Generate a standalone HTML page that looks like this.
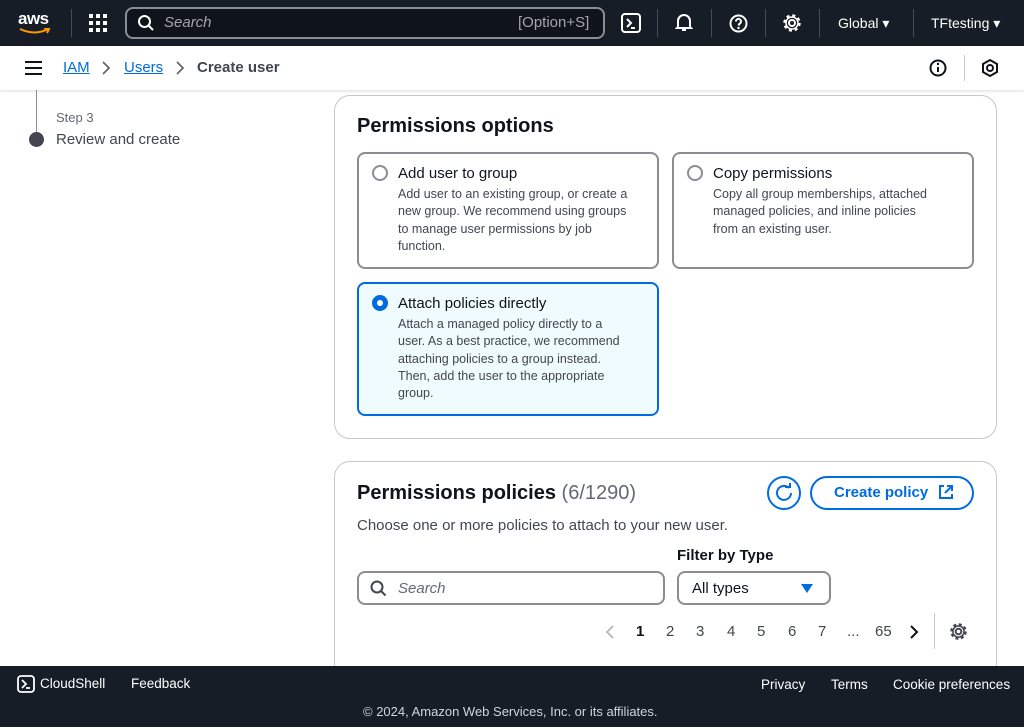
<!DOCTYPE html>
<html><head><meta charset="utf-8"><style>
*{box-sizing:border-box;margin:0;padding:0}
body{width:1024px;height:727px;overflow:hidden;background:#fff;font-family:"Liberation Sans",sans-serif;color:#0f141a;position:relative}
.abs{position:absolute}
.top{left:0;top:0;width:1024px;height:46px;background:#161d26}
.sep{width:1px;height:28px;background:#414d5c;top:9px}
.wt{color:#fff;font-size:14px}
.card{border:1px solid #c6c6cd;border-radius:16px;background:#fff}
.opt{border:2px solid #8c8c94;border-radius:8px;background:#fff}
.radio{width:16px;height:16px;border:2px solid #8c8c94;border-radius:50%;background:#fff}
.ot{font-size:15px;color:#0f141a}
.od{font-size:12.5px;color:#424650;line-height:17.3px}
.foot{left:0;top:666px;width:1024px;height:61px;background:#161d26}
.pg{font-size:15px;color:#424650;top:623px}
</style></head><body>
<div class="abs top"></div>
<div class="abs wt" style="left:18px;top:9px;font-size:17px;font-weight:bold;letter-spacing:-.5px">aws</div>
<svg class="abs" style="left:18px;top:28px" width="34" height="8"><path d="M2 1 Q17 8 30 1 M26 0 L31 1 L29 5" stroke="#ff9900" stroke-width="2" fill="none"/></svg>
<div class="abs sep" style="left:71px"></div>
<svg class="abs" style="left:89px;top:14px" width="18" height="18" fill="#fff"><rect x="0" y="0" width="4" height="4"/><rect x="7" y="0" width="4" height="4"/><rect x="14" y="0" width="4" height="4"/><rect x="0" y="7" width="4" height="4"/><rect x="7" y="7" width="4" height="4"/><rect x="14" y="7" width="4" height="4"/><rect x="0" y="14" width="4" height="4"/><rect x="7" y="14" width="4" height="4"/><rect x="14" y="14" width="4" height="4"/></svg>
<div class="abs" style="left:125px;top:7px;width:480px;height:32px;border:2px solid #8c8c94;border-radius:8px;background:#0f141a"></div>
<svg class="abs" style="left:137px;top:14px" width="18" height="18"><circle cx="7.5" cy="7.5" r="5.5" stroke="#fff" stroke-width="2" fill="none"/><path d="M11.5 11.5 L16 16" stroke="#fff" stroke-width="2"/></svg>
<div class="abs" style="left:164px;top:14px;color:#a4a4ad;font-style:italic;font-size:15px">Search</div>
<div class="abs" style="left:518px;top:14px;color:#a4a4ad;font-size:15px">[Option+S]</div>
<svg class="abs" style="left:621px;top:13px" width="20" height="20"><rect x="1" y="1" width="18" height="18" rx="3" stroke="#fff" stroke-width="2" fill="none"/><path d="M6 6 L10 10 L6 14 M10 15 H14" stroke="#fff" stroke-width="2" fill="none"/></svg>
<div class="abs sep" style="left:657px"></div>
<svg class="abs" style="left:675px;top:13px" width="18" height="20"><path d="M3 14 V8 a6 6 0 0 1 12 0 V14 L16 15 H2 Z M7 17 H11" stroke="#fff" stroke-width="2" fill="none"/></svg>
<div class="abs sep" style="left:711px"></div>
<svg class="abs" style="left:729px;top:14px" width="19" height="19"><circle cx="9.5" cy="9.5" r="8" stroke="#fff" stroke-width="2" fill="none"/><path d="M7 7.5 a2.5 2.5 0 1 1 3.5 2.2 L9.5 11.5" stroke="#fff" stroke-width="2" fill="none"/><circle cx="9.5" cy="14" r="1.2" fill="#fff"/></svg>
<div class="abs sep" style="left:765px"></div>
<svg class="abs" style="left:782px;top:13px" width="20" height="20"><circle cx="10" cy="10" r="3" stroke="#fff" stroke-width="2" fill="none"/><circle cx="10" cy="10" r="7.5" stroke="#fff" stroke-width="2.5" stroke-dasharray="3 2.9" fill="none"/><circle cx="10" cy="10" r="6" stroke="#fff" stroke-width="1.5" fill="none"/></svg>
<div class="abs sep" style="left:819px"></div>
<div class="abs wt" style="left:838px;top:15px">Global ▾</div>
<div class="abs sep" style="left:913px"></div>
<div class="abs wt" style="left:931px;top:15px">TFtesting ▾</div>

<div class="abs" style="left:0;top:46px;width:1024px;height:44px;background:#fff;box-shadow:0 1px 3px rgba(0,0,0,.15)"></div>
<svg class="abs" style="left:25px;top:60px" width="18" height="16"><path d="M0 2H17M0 8H17M0 14H17" stroke="#0f141a" stroke-width="2"/></svg>
<div class="abs" style="left:63px;top:59px;font-size:15px;color:#006ce0;text-decoration:underline">IAM</div>
<svg class="abs" style="left:100px;top:60px" width="12" height="16"><path d="M3 2 L9 8 L3 14" stroke="#656871" stroke-width="1.8" fill="none"/></svg>
<div class="abs" style="left:124px;top:59px;font-size:15px;color:#006ce0;text-decoration:underline">Users</div>
<svg class="abs" style="left:174px;top:60px" width="12" height="16"><path d="M3 2 L9 8 L3 14" stroke="#656871" stroke-width="1.8" fill="none"/></svg>
<div class="abs" style="left:197px;top:59px;font-size:15px;color:#424650;font-weight:bold">Create user</div>
<svg class="abs" style="left:929px;top:59px" width="18" height="18"><circle cx="9" cy="9" r="7.5" stroke="#0f141a" stroke-width="2" fill="none"/><path d="M9 8V13" stroke="#0f141a" stroke-width="2"/><circle cx="9" cy="5" r="1.2" fill="#0f141a"/></svg>
<div class="abs" style="left:964px;top:55px;width:1px;height:26px;background:#c6c6cd"></div>
<svg class="abs" style="left:981px;top:59px" width="18" height="18"><path d="M9 1 L16 5 V13 L9 17 L2 13 V5 Z" stroke="#0f141a" stroke-width="2" fill="none"/><circle cx="9" cy="9" r="3" stroke="#0f141a" stroke-width="2" fill="none"/></svg>

<div class="abs" style="left:36px;top:90px;width:1px;height:42px;background:#8c8c94"></div>
<div class="abs" style="left:56px;top:110px;font-size:13px;color:#656871">Step 3</div>
<div class="abs" style="left:29px;top:132px;width:15px;height:15px;border-radius:50%;background:#424650"></div>
<div class="abs" style="left:56px;top:131px;font-size:15px;color:#424650">Review and create</div>

<div class="abs card" style="left:334px;top:95px;width:663px;height:344px"></div>
<div class="abs" style="left:357px;top:115px;font-size:20px;font-weight:bold">Permissions options</div>
<div class="abs opt" style="left:357px;top:152px;width:302px;height:117px"></div>
<div class="abs radio" style="left:372px;top:165px"></div>
<div class="abs ot" style="left:398px;top:165px">Add user to group</div>
<div class="abs od" style="left:398px;top:186px;width:232px">Add user to an existing group, or create a new group. We recommend using groups to manage user permissions by job function.</div>
<div class="abs opt" style="left:672px;top:152px;width:302px;height:117px"></div>
<div class="abs radio" style="left:687px;top:165px"></div>
<div class="abs ot" style="left:713px;top:165px">Copy permissions</div>
<div class="abs od" style="left:713px;top:186px;width:225px">Copy all group memberships, attached managed policies, and inline policies from an existing user.</div>
<div class="abs opt" style="left:357px;top:282px;width:302px;height:134px;border-color:#006ce0;background:#f0fbff"></div>
<div class="abs radio" style="left:372px;top:295px;border:5px solid #006ce0"></div>
<div class="abs ot" style="left:398px;top:295px">Attach policies directly</div>
<div class="abs od" style="left:398px;top:316px;width:225px">Attach a managed policy directly to a user. As a best practice, we recommend attaching policies to a group instead. Then, add the user to the appropriate group.</div>

<div class="abs card" style="left:334px;top:461px;width:663px;height:240px"></div>
<div class="abs" style="left:357px;top:482px;font-size:20px;font-weight:bold">Permissions policies <span style="font-weight:normal;color:#656871">(6/1290)</span></div>
<div class="abs" style="left:767px;top:476px;width:34px;height:34px;border:2px solid #006ce0;border-radius:50%"></div>
<svg class="abs" style="left:774px;top:483px" width="20" height="20"><path d="M15 5 A7 7 0 1 0 17 10" stroke="#006ce0" stroke-width="2" fill="none"/><path d="M11 4 H16 V0" stroke="#006ce0" stroke-width="2" fill="none"/></svg>
<div class="abs" style="left:810px;top:476px;width:164px;height:34px;border:2px solid #006ce0;border-radius:17px"></div>
<div class="abs" style="left:834px;top:484px;font-size:15px;font-weight:bold;color:#006ce0">Create policy</div>
<svg class="abs" style="left:938px;top:484px" width="16" height="16"><path d="M6 2 H2 V14 H14 V10 M9 2 H14 V7 M14 2 L7 9" stroke="#006ce0" stroke-width="2" fill="none"/></svg>
<div class="abs" style="left:357px;top:517px;font-size:15px;color:#424650">Choose one or more policies to attach to your new user.</div>
<div class="abs" style="left:677px;top:547px;font-size:15px;font-weight:bold">Filter by Type</div>
<div class="abs" style="left:357px;top:571px;width:308px;height:34px;border:2px solid #8c8c94;border-radius:8px"></div>
<svg class="abs" style="left:370px;top:580px" width="17" height="17"><circle cx="7" cy="7" r="5.5" stroke="#424650" stroke-width="2" fill="none"/><path d="M11 11 L15.5 15.5" stroke="#424650" stroke-width="2"/></svg>
<div class="abs" style="left:398px;top:580px;font-size:15px;font-style:italic;color:#656871">Search</div>
<div class="abs" style="left:677px;top:571px;width:154px;height:34px;border:2px solid #8c8c94;border-radius:8px"></div>
<div class="abs" style="left:692px;top:580px;font-size:15px">All types</div>
<div class="abs" style="left:801px;top:584px;width:0;height:0;border-left:6px solid transparent;border-right:6px solid transparent;border-top:9px solid #006ce0"></div>
<svg class="abs" style="left:604px;top:624px" width="12" height="16"><path d="M9 2 L3 8 L9 14" stroke="#b4b4bb" stroke-width="1.8" fill="none"/></svg>
<div class="abs pg" style="left:636px;color:#0f141a;font-weight:bold">1</div>
<div class="abs pg" style="left:666px">2</div>
<div class="abs pg" style="left:696px">3</div>
<div class="abs pg" style="left:727px">4</div>
<div class="abs pg" style="left:757px">5</div>
<div class="abs pg" style="left:788px">6</div>
<div class="abs pg" style="left:818px">7</div>
<div class="abs pg" style="left:847px">...</div>
<div class="abs pg" style="left:875px">65</div>
<svg class="abs" style="left:908px;top:624px" width="12" height="16"><path d="M3 2 L9 8 L3 14" stroke="#0f141a" stroke-width="2" fill="none"/></svg>
<div class="abs" style="left:934px;top:613px;width:1px;height:36px;background:#c6c6cd"></div>
<svg class="abs" style="left:949px;top:622px" width="19" height="19"><circle cx="9.5" cy="9.5" r="2.8" stroke="#424650" stroke-width="2" fill="none"/><circle cx="9.5" cy="9.5" r="7" stroke="#424650" stroke-width="2.5" stroke-dasharray="3 2.5" fill="none"/><circle cx="9.5" cy="9.5" r="5.6" stroke="#424650" stroke-width="1.5" fill="none"/></svg>

<div class="abs foot"></div>
<svg class="abs" style="left:17px;top:675px" width="18" height="18"><rect x="1" y="1" width="16" height="16" rx="3" stroke="#fff" stroke-width="1.8" fill="none"/><path d="M5 5 L9 9 L5 13 M9 13 H13" stroke="#fff" stroke-width="1.8" fill="none"/></svg>
<div class="abs wt" style="left:40px;top:676px;font-size:13.5px">CloudShell</div>
<div class="abs wt" style="left:131px;top:676px;font-size:13.5px">Feedback</div>
<div class="abs wt" style="left:761px;top:677px;font-size:13.5px">Privacy</div>
<div class="abs wt" style="left:831px;top:677px;font-size:13.5px">Terms</div>
<div class="abs wt" style="left:893px;top:677px;font-size:13.5px">Cookie preferences</div>
<div class="abs" style="left:363px;top:704px;font-size:13px;color:#d1d5db">© 2024, Amazon Web Services, Inc. or its affiliates.</div>
</body></html>
